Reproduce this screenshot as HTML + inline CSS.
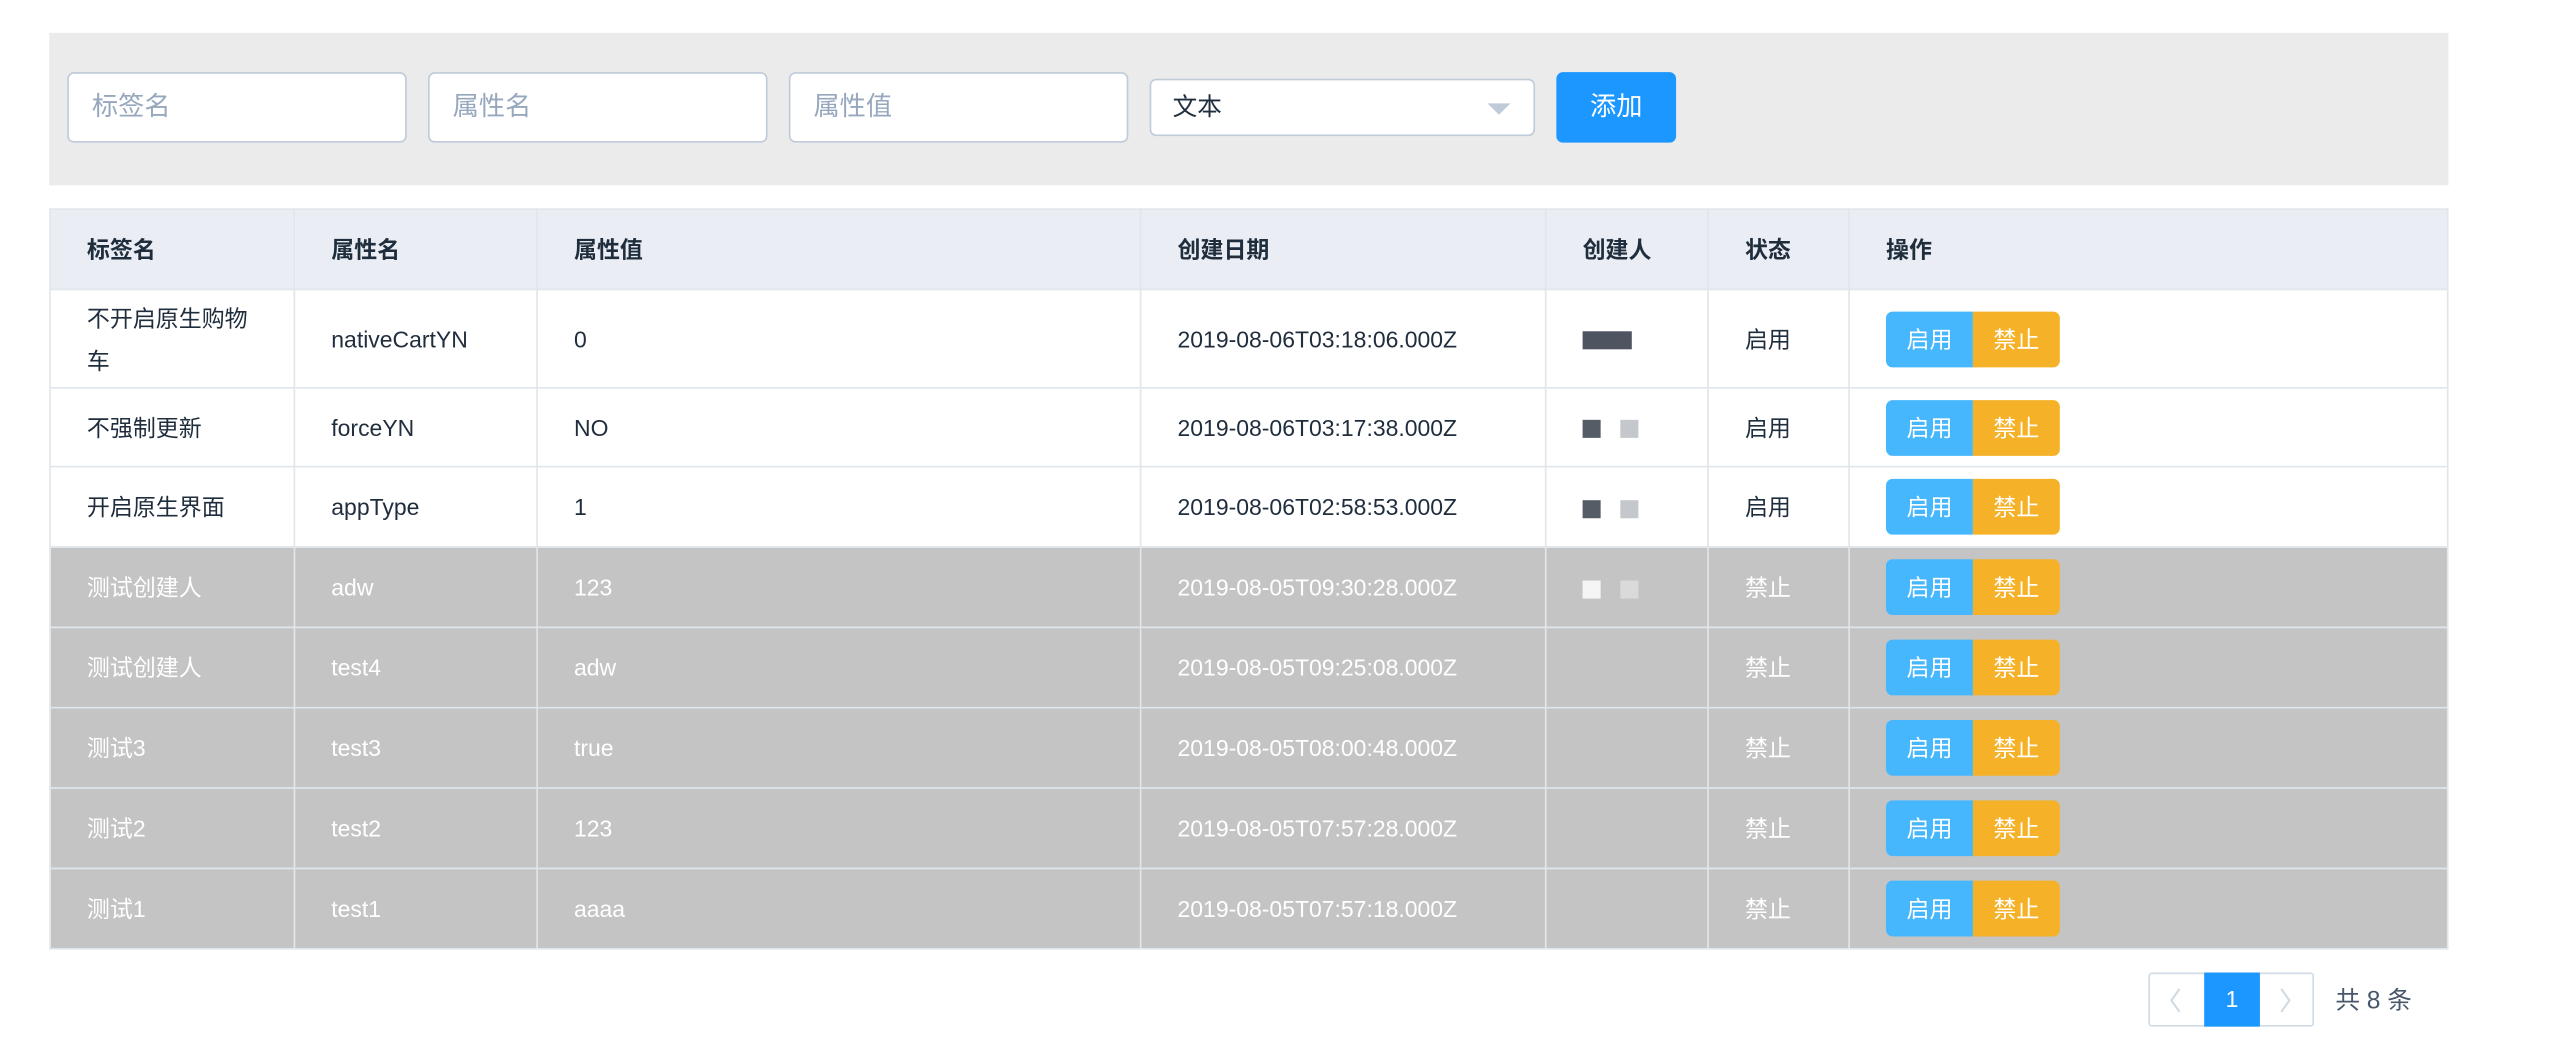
<!DOCTYPE html>
<html><head><meta charset="utf-8"><style>
html,body{margin:0;padding:0;background:#fff;width:2570px;height:1056px;overflow:hidden}
#w{position:absolute;left:0;top:0;width:1567px;height:644px;transform:scale(1.64);transform-origin:0 0;font-family:"Liberation Sans","Noto Sans CJK SC",sans-serif;font-size:14px;color:#1f2d3d}
.a{position:absolute;box-sizing:border-box}
.panel{left:30px;top:20px;width:1463px;height:93px;background:#ebebeb}
.inp{top:44px;height:43px;background:#fff;border:1px solid #bfcbd9;border-radius:4px;padding-left:14px;line-height:41px;color:#97a8be;font-size:16px}
.sel{left:701px;top:48px;width:235px;height:35px;background:#fff;border:1px solid #bfcbd9;border-radius:4px;padding-left:13px;line-height:33px;font-size:15px;color:#1f2d3d}
.tri{position:absolute;right:14px;top:14px;width:0;height:0;border-left:7px solid transparent;border-right:7px solid transparent;border-top:7px solid #bfcbd9}
.add{left:949px;top:44px;width:73px;height:43px;background:#1c97ff;border-radius:4px;color:#fff;text-align:center;line-height:43px;font-size:16px}
table{position:absolute;left:30px;top:127px;width:1463px;border-collapse:collapse;table-layout:fixed}
td,th{border:1px solid #dfe6ec;padding:0 18px 0 22px;text-align:left;font-size:14px;line-height:26px;white-space:normal}
th{background:#eaeef4;height:48px;font-weight:bold;color:#1f2d3d}
tr.w td{background:#fff;color:#1f2d3d}
tr.g td{background:#c4c4c4;color:#fff}
.b{display:inline-block;width:53px;height:34px;line-height:34px;text-align:center;color:#fff;font-size:14px;vertical-align:middle}
.b1{background:#47b7fd;border-radius:4px 0 0 4px}
.b2{background:#f5b127;border-radius:0 4px 4px 0}
.blk{display:inline-block;width:11px;height:11px;margin-right:12px;vertical-align:middle}
.pg{top:593px;height:33px;border:1px solid #d1dbe5;border-radius:2px;background:#fff}
</style></head><body><div id="w">
<div class="a panel"></div>
<div class="a inp" style="left:41px;width:207px">标签名</div>
<div class="a inp" style="left:261px;width:207px">属性名</div>
<div class="a inp" style="left:481px;width:207px">属性值</div>
<div class="a sel">文本<span class="tri"></span></div>
<div class="a add">添加</div>
<table>
<colgroup><col style="width:149px"><col style="width:148px"><col style="width:368px"><col style="width:247px"><col style="width:99px"><col style="width:86px"><col></colgroup>
<tr><th>标签名</th><th>属性名</th><th>属性值</th><th>创建日期</th><th>创建人</th><th>状态</th><th>操作</th></tr>
<tr class="w" style="height:60px"><td>不开启原生购物车</td><td>nativeCartYN</td><td>0</td><td>2019-08-06T03:18:06.000Z</td><td><span class="blk" style="width:30px;background:#4f5560;margin-right:0"></span></td><td>启用</td><td><span class="b b1">启用</span><span class="b b2">禁止</span></td></tr>
<tr class="w" style="height:48px"><td>不强制更新</td><td>forceYN</td><td>NO</td><td>2019-08-06T03:17:38.000Z</td><td><span class="blk" style="background:#565c66"></span><span class="blk" style="background:#c4c7cc"></span></td><td>启用</td><td><span class="b b1">启用</span><span class="b b2">禁止</span></td></tr>
<tr class="w" style="height:49px"><td>开启原生界面</td><td>appType</td><td>1</td><td>2019-08-06T02:58:53.000Z</td><td><span class="blk" style="background:#565c66"></span><span class="blk" style="background:#c4c7cc"></span></td><td>启用</td><td><span class="b b1">启用</span><span class="b b2">禁止</span></td></tr>
<tr class="g" style="height:49px"><td>测试创建人</td><td>adw</td><td>123</td><td>2019-08-05T09:30:28.000Z</td><td><span class="blk" style="background:#f5f5f5"></span><span class="blk" style="background:#dadada"></span></td><td>禁止</td><td><span class="b b1">启用</span><span class="b b2">禁止</span></td></tr>
<tr class="g" style="height:49px"><td>测试创建人</td><td>test4</td><td>adw</td><td>2019-08-05T09:25:08.000Z</td><td></td><td>禁止</td><td><span class="b b1">启用</span><span class="b b2">禁止</span></td></tr>
<tr class="g" style="height:49px"><td>测试3</td><td>test3</td><td>true</td><td>2019-08-05T08:00:48.000Z</td><td></td><td>禁止</td><td><span class="b b1">启用</span><span class="b b2">禁止</span></td></tr>
<tr class="g" style="height:49px"><td>测试2</td><td>test2</td><td>123</td><td>2019-08-05T07:57:28.000Z</td><td></td><td>禁止</td><td><span class="b b1">启用</span><span class="b b2">禁止</span></td></tr>
<tr class="g" style="height:49px"><td>测试1</td><td>test1</td><td>aaaa</td><td>2019-08-05T07:57:18.000Z</td><td></td><td>禁止</td><td><span class="b b1">启用</span><span class="b b2">禁止</span></td></tr>
</table>
<div class="a pg" style="left:1310px;width:101px"></div>
<svg class="a" style="left:1320px;top:601px" width="14" height="18" viewBox="0 0 14 18"><path d="M9 2 L4 9 L9 16" fill="none" stroke="#d1dbe5" stroke-width="1.3"/></svg>
<div class="a" style="left:1344px;top:593px;width:34px;height:33px;background:#1c97ff;color:#fff;text-align:center;line-height:33px;font-size:14px">1</div>
<svg class="a" style="left:1386px;top:601px" width="14" height="18" viewBox="0 0 14 18"><path d="M5 2 L10 9 L5 16" fill="none" stroke="#d1dbe5" stroke-width="1.3"/></svg>
<div class="a" style="left:1424px;top:599px;font-size:15px;color:#48576a">共 8 条</div>
</div></body></html>
